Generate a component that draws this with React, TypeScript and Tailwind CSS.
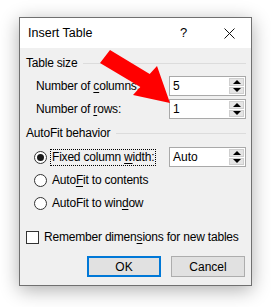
import React from "react";

function U({ children }: { children: React.ReactNode }) {
  return <span className="underline underline-offset-[2px] decoration-[1px]">{children}</span>;
}

function SpinBox({ value }: { value: string }) {
  return (
    <div className="flex h-[20px] w-[77px] items-stretch border border-[#a9a9a9] bg-white tracking-normal">
      <div className="flex-1 pl-[3px] text-[12px] leading-[18px] text-black">{value}</div>
      <div className="my-[1px] mr-[1px] flex w-[15px] flex-col gap-[1px]">
        <div className="flex flex-1 items-center justify-center border border-[#cfcfcf] bg-[#e5e5e5]">
          <div className="h-0 w-0 border-x-[4px] border-b-[4px] border-x-transparent border-b-black" />
        </div>
        <div className="flex flex-1 items-center justify-center border border-[#cfcfcf] bg-[#e5e5e5]">
          <div className="h-0 w-0 border-x-[4px] border-t-[4px] border-x-transparent border-t-black" />
        </div>
      </div>
    </div>
  );
}

function GroupHeader({ title }: { title: string }) {
  return (
    <div className="flex h-[16px] items-center gap-[6px] pl-[6px] pr-[5px]">
      <span className="whitespace-nowrap text-[12px] leading-[16px]">{title}</span>
      <div className="h-px flex-1 bg-[#dcdcdc]" />
    </div>
  );
}

function Radio({ checked }: { checked?: boolean }) {
  return (
    <div className="flex h-[13px] w-[13px] shrink-0 items-center justify-center rounded-full border border-[#333333] bg-white">
      {checked && <div className="h-[7px] w-[7px] rounded-full bg-[#1a1a1a]" />}
    </div>
  );
}

export default function App() {
  return (
    <div className="relative h-[307px] w-[271px] overflow-hidden bg-white pl-[19px] pt-[17px] font-['Liberation_Sans',Arial,sans-serif] text-black">
      <div className="w-[233px] border border-[#707070] bg-[#f0f0f0] shadow-[0_4px_18px_rgba(0,0,0,0.32)]">
        {/* title bar */}
        <div className="flex h-[30px] items-center bg-white pl-[8px]">
          <span className="w-[152px] text-[12.5px] leading-[16px]">Insert Table</span>
          <span className="text-[13px] leading-[16px]">?</span>
          <svg className="ml-[37px]" width="11" height="11" viewBox="0 0 11 11">
            <path d="M0.5 0.5 L10.5 10.5 M10.5 0.5 L0.5 10.5" stroke="#111" strokeWidth="1" />
          </svg>
        </div>

        <div className="flex flex-col whitespace-nowrap pb-[8px] pt-[7px] text-[12px] leading-[16px] tracking-[-0.2px]">
          <GroupHeader title="Table size" />
          <div className="mt-[5px] flex flex-col gap-[3px] pl-[16px] pr-[5px]">
            <div className="flex items-center justify-between">
              <span>
                Number of <U>c</U>olumns:
              </span>
              <SpinBox value="5" />
            </div>
            <div className="flex items-center justify-between">
              <span>
                Number of <U>r</U>ows:
              </span>
              <SpinBox value="1" />
            </div>
          </div>

          <div className="mt-[6px]">
            <GroupHeader title="AutoFit behavior" />
          </div>
          <div className="mt-[6px] flex flex-col gap-[3px] pl-[14px] pr-[5px]">
            <div className="flex h-[20px] items-center">
              <Radio checked />
              <span className="ml-[3px] border border-dotted border-black px-px leading-[15px]">
                Fixed column <U>w</U>idth:
              </span>
              <div className="ml-auto">
                <SpinBox value="Auto" />
              </div>
            </div>
            <div className="flex h-[20px] items-center">
              <Radio />
              <span className="ml-[5px]">
                Auto<U>F</U>it to contents
              </span>
            </div>
            <div className="flex h-[20px] items-center">
              <Radio />
              <span className="ml-[5px]">
                AutoFit to win<U>d</U>ow
              </span>
            </div>
          </div>

          <div className="mt-[16px] flex h-[16px] items-center pl-[6px]">
            <div className="h-[13px] w-[13px] shrink-0 border border-[#333333] bg-white" />
            <span className="ml-[5px]">
              Remember dimen<U>s</U>ions for new tables
            </span>
          </div>

          <div className="mt-[11px] flex justify-end gap-[10px] pr-[6px] tracking-normal">
            <button className="h-[21px] w-[74px] border-2 border-[#0078d7] bg-[#e1e1e1] text-[12px] leading-[16px]">
              OK
            </button>
            <button className="h-[21px] w-[74px] border border-[#adadad] bg-[#e1e1e1] text-[12px] leading-[16px]">
              Cancel
            </button>
          </div>
        </div>
      </div>

      <svg className="pointer-events-none absolute left-0 top-0" width="271" height="307" viewBox="0 0 271 307">
        <polygon
          points="110,50 149.7,74 157,66 170,103 133,95 140.3,87 100,63"
          fill="#ff0000"
        />
      </svg>
    </div>
  );
}
